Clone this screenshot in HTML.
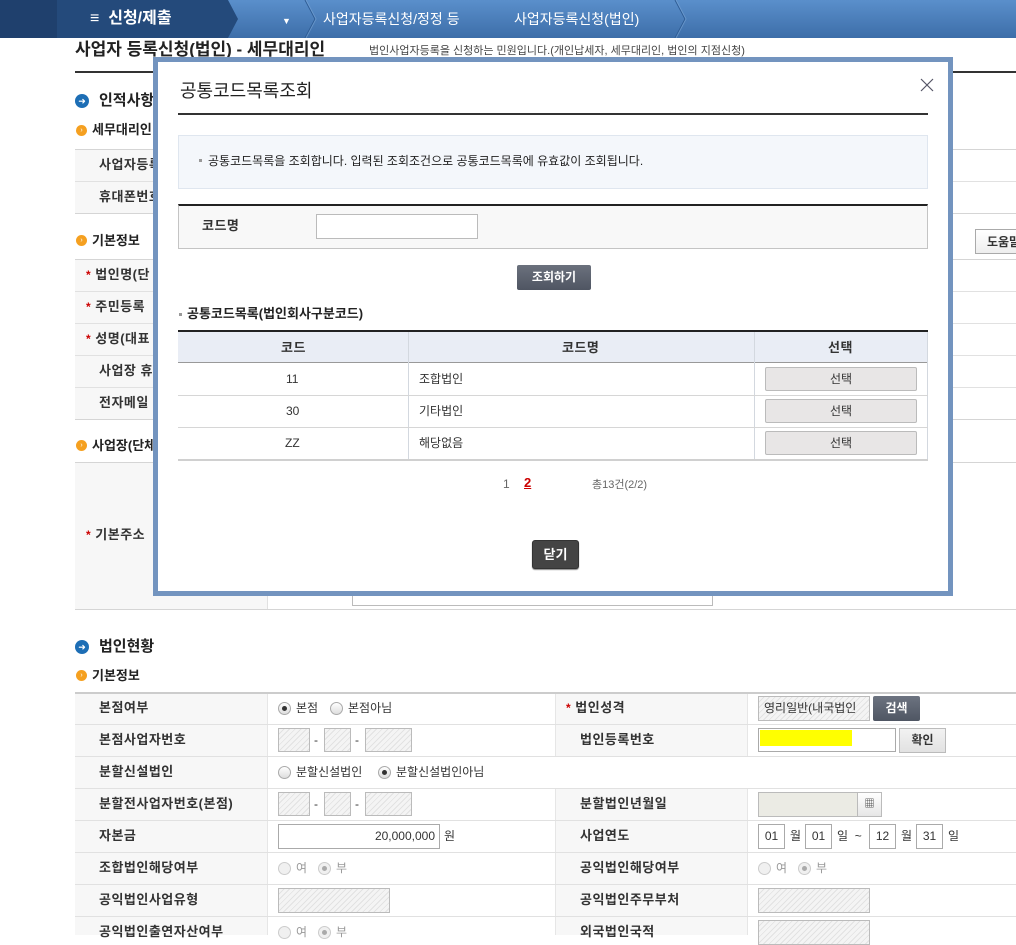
<!DOCTYPE html>
<html><head><meta charset="utf-8">
<style>
*{margin:0;padding:0;box-sizing:border-box}
body{width:1016px;height:935px;overflow:hidden;background:#fff;font-family:"Liberation Sans","Noto Sans CJK KR",sans-serif;font-size:12px;color:#333;position:relative;line-height:16px}
.a{position:absolute}
.lbl{position:absolute;font-weight:bold;font-size:13px;color:#333;letter-spacing:0.5px;white-space:nowrap;line-height:16px}
.star{color:#c00;font-size:12px}
.hl{position:absolute;height:1px;background:#e1e1e1}
.hat{position:absolute;border:1px solid #bbb;background:repeating-linear-gradient(135deg,#f4f4f4 0 3px,#e2e2e2 3px 4px)}
.inp{position:absolute;border:1px solid #aaa;background:#fff;font-size:12px;line-height:22px;text-align:center}
.rad{position:absolute;width:13px;height:13px;border-radius:50%;border:1px solid #aaa;background:linear-gradient(#fff,#ddd)}
.rad.on::after{content:"";position:absolute;left:3px;top:3px;width:5px;height:5px;border-radius:50%;background:#333}
.rad.dis{border-color:#ccc;background:#f0f0f0}
.rad.dis.on::after{background:#aaa}
.t{position:absolute;font-size:12px;white-space:nowrap;line-height:16px}
.h2{position:absolute;font-weight:bold;font-size:15px;color:#222;white-space:nowrap;line-height:18px}
.h3{position:absolute;font-weight:bold;font-size:13px;color:#222;white-space:nowrap;line-height:16px}
.bic{position:absolute;width:14px;height:14px;border-radius:50%;background:#1d6eb5;color:#fff;font-size:9px;line-height:14px;text-align:center}
.oic{position:absolute;width:11px;height:11px;border-radius:50%;background:#f5a020;color:#fff;font-size:7px;line-height:11px;text-align:center}
</style></head><body>

<div class="a" style="left:0;top:0;width:1016px;height:38px;background:linear-gradient(#5a8fcb,#3d6ea9)"></div>
<div class="a" style="left:0;top:0;width:57px;height:38px;background:#1f406d"></div>
<div class="a" style="left:57px;top:0;width:171px;height:38px;background:#244a7b"></div>
<svg class="a" style="left:220px;top:0" width="20" height="38"><polygon points="0,0 8,0 18,19 8,38 0,38" fill="#244a7b"/></svg>
<svg class="a" style="left:300px;top:0" width="716" height="38"><polyline points="5,0 15,19 5,38" fill="none" stroke="#2c5a93"/><polyline points="6,0 16,19 6,38" fill="none" stroke="#7ba6d6" opacity=".6"/><polyline points="375,0 385,19 375,38" fill="none" stroke="#2c5a93"/><polyline points="376,0 386,19 376,38" fill="none" stroke="#7ba6d6" opacity=".6"/></svg>
<div class="a" style="left:90px;top:10px;color:#fff;font-weight:bold;font-size:16px;line-height:18px">≡&nbsp; 신청/제출</div>
<div class="a" style="left:282px;top:13px;color:#fff;font-size:9px">▼</div>
<div class="a" style="left:323px;top:10px;color:#fff;font-size:14px;line-height:18px">사업자등록신청/정정 등</div>
<div class="a" style="left:514px;top:10px;color:#fff;font-size:14px;line-height:18px">사업자등록신청(법인)</div>

<div class="a" style="left:75px;top:40px;font-size:17px;font-weight:bold;color:#222;line-height:20px">사업자 등록신청(법인) - 세무대리인</div>
<div class="a" style="left:369px;top:44px;font-size:11px;color:#444;line-height:14px">법인사업자등록을 신청하는 민원입니다.(개인납세자, 세무대리인, 법인의 지점신청)</div>
<div class="a" style="left:75px;top:71px;width:941px;height:2px;background:#333"></div>

<div class="bic" style="left:75px;top:94px">➜</div><div class="h2" style="left:99px;top:92px">인적사항</div>
<div class="oic" style="left:76px;top:125px">›</div><div class="h3" style="left:92px;top:122px">세무대리인</div>
<div class="a" style="left:75px;top:149px;width:200px;height:64px;background:#f7f7f7"></div>
<div class="hl" style="left:75px;top:149px;width:941px;background:#d5d5d5"></div>
<div class="hl" style="left:75px;top:181px;width:941px"></div>
<div class="hl" style="left:75px;top:213px;width:941px;background:#d5d5d5"></div>
<div class="lbl" style="left:99px;top:157px">사업자등록</div>
<div class="lbl" style="left:99px;top:189px">휴대폰번호</div>

<div class="oic" style="left:76px;top:235px">›</div><div class="h3" style="left:92px;top:233px">기본정보</div>
<div class="a" style="left:975px;top:229px;width:45px;height:25px;border:1px solid #aaa;background:linear-gradient(#fff,#eee);font-size:12px;font-weight:bold;padding:4px 0 0 11px;white-space:nowrap">도움말</div>
<div class="a" style="left:75px;top:259px;width:200px;height:160px;background:#f7f7f7"></div>
<div class="hl" style="left:75px;top:259px;width:941px;background:#d5d5d5"></div>
<div class="hl" style="left:75px;top:291px;width:941px"></div>
<div class="hl" style="left:75px;top:323px;width:941px"></div>
<div class="hl" style="left:75px;top:355px;width:941px"></div>
<div class="hl" style="left:75px;top:387px;width:941px"></div>
<div class="hl" style="left:75px;top:419px;width:941px;background:#d5d5d5"></div>
<div class="lbl" style="left:86px;top:267px"><span class="star">*</span> 법인명(단</div>
<div class="lbl" style="left:86px;top:299px"><span class="star">*</span> 주민등록</div>
<div class="lbl" style="left:86px;top:331px"><span class="star">*</span> 성명(대표</div>
<div class="lbl" style="left:99px;top:363px">사업장 휴</div>
<div class="lbl" style="left:99px;top:395px">전자메일</div>

<div class="oic" style="left:76px;top:440px">›</div><div class="h3" style="left:92px;top:438px">사업장(단체</div>
<div class="a" style="left:75px;top:462px;width:192px;height:147px;background:#f7f7f7"></div>
<div class="hl" style="left:75px;top:462px;width:941px;background:#d5d5d5"></div>
<div class="hl" style="left:75px;top:609px;width:941px;background:#d5d5d5"></div>
<div class="a" style="left:267px;top:462px;width:1px;height:147px;background:#e1e1e1"></div>
<div class="lbl" style="left:86px;top:527px"><span class="star">*</span> 기본주소</div>
<div class="a" style="left:352px;top:585px;width:361px;height:21px;border:1px solid #bbb;background:#fff"></div>

<div class="bic" style="left:75px;top:640px">➜</div><div class="h2" style="left:99px;top:638px">법인현황</div>
<div class="oic" style="left:76px;top:670px">›</div><div class="h3" style="left:92px;top:668px">기본정보</div>
<div class="a" style="left:75px;top:692px;width:192px;height:243px;background:#f7f7f7"></div>
<div class="a" style="left:555px;top:692px;width:193px;height:64px;background:#f7f7f7"></div>
<div class="a" style="left:555px;top:788px;width:193px;height:147px;background:#f7f7f7"></div>
<div class="a" style="left:267px;top:692px;width:1px;height:243px;background:#e6e6e6"></div>
<div class="a" style="left:555px;top:692px;width:1px;height:64px;background:#e6e6e6"></div>
<div class="a" style="left:555px;top:788px;width:1px;height:147px;background:#e6e6e6"></div>
<div class="a" style="left:747px;top:692px;width:1px;height:64px;background:#e6e6e6"></div>
<div class="a" style="left:747px;top:788px;width:1px;height:147px;background:#e6e6e6"></div>
<div class="hl" style="left:75px;top:692px;width:941px;background:#ccc;height:2px"></div>
<div class="hl" style="left:75px;top:724px;width:941px"></div>
<div class="hl" style="left:75px;top:756px;width:941px"></div>
<div class="hl" style="left:75px;top:788px;width:941px"></div>
<div class="hl" style="left:75px;top:820px;width:941px"></div>
<div class="hl" style="left:75px;top:852px;width:941px"></div>
<div class="hl" style="left:75px;top:884px;width:941px"></div>
<div class="hl" style="left:75px;top:916px;width:941px"></div>

<div class="lbl" style="left:99px;top:700px">본점여부</div>
<div class="lbl" style="left:99px;top:732px">본점사업자번호</div>
<div class="lbl" style="left:99px;top:764px">분할신설법인</div>
<div class="lbl" style="left:99px;top:796px">분할전사업자번호(본점)</div>
<div class="lbl" style="left:99px;top:828px">자본금</div>
<div class="lbl" style="left:99px;top:860px">조합법인해당여부</div>
<div class="lbl" style="left:99px;top:892px">공익법인사업유형</div>
<div class="lbl" style="left:99px;top:924px">공익법인출연자산여부</div>

<div class="lbl" style="left:566px;top:700px"><span class="star">*</span> 법인성격</div>
<div class="lbl" style="left:580px;top:732px">법인등록번호</div>
<div class="lbl" style="left:580px;top:796px">분할법인년월일</div>
<div class="lbl" style="left:580px;top:828px">사업연도</div>
<div class="lbl" style="left:580px;top:860px">공익법인해당여부</div>
<div class="lbl" style="left:580px;top:892px">공익법인주무부처</div>
<div class="lbl" style="left:580px;top:924px">외국법인국적</div>

<div class="rad on" style="left:278px;top:702px"></div><div class="t" style="left:296px;top:700px">본점</div>
<div class="rad" style="left:330px;top:702px"></div><div class="t" style="left:348px;top:700px">본점아님</div>
<div class="hat" style="left:758px;top:696px;width:112px;height:25px;font-size:12px;line-height:23px;padding-left:5px;white-space:nowrap;overflow:hidden">영리일반(내국법인</div>
<div class="a" style="left:873px;top:696px;width:47px;height:25px;background:linear-gradient(#6c7380,#4f5663);border-radius:2px;color:#fff;font-weight:bold;font-size:12px;text-align:center;line-height:25px">검색</div>
<div class="hat" style="left:278px;top:728px;width:32px;height:24px"></div><div class="t" style="left:314px;top:732px">-</div>
<div class="hat" style="left:324px;top:728px;width:27px;height:24px"></div><div class="t" style="left:355px;top:732px">-</div>
<div class="hat" style="left:365px;top:728px;width:47px;height:24px"></div>
<div class="a" style="left:758px;top:728px;width:138px;height:24px;border:1px solid #aaa;background:#fff"></div>
<div class="a" style="left:760px;top:730px;width:92px;height:16px;background:#ff0"></div>
<div class="a" style="left:899px;top:728px;width:47px;height:25px;border:1px solid #bbb;background:linear-gradient(#f2f2f2,#e2e2e2);font-weight:bold;font-size:12px;text-align:center;line-height:23px">확인</div>
<div class="rad" style="left:278px;top:766px"></div><div class="t" style="left:296px;top:764px">분할신설법인</div>
<div class="rad on" style="left:378px;top:766px"></div><div class="t" style="left:396px;top:764px">분할신설법인아님</div>
<div class="hat" style="left:278px;top:792px;width:32px;height:24px"></div><div class="t" style="left:314px;top:796px">-</div>
<div class="hat" style="left:324px;top:792px;width:27px;height:24px"></div><div class="t" style="left:355px;top:796px">-</div>
<div class="hat" style="left:365px;top:792px;width:47px;height:24px"></div>
<div class="a" style="left:758px;top:792px;width:100px;height:25px;border:1px solid #bbb;background:#ebebe4"></div>
<div class="a" style="left:857px;top:792px;width:25px;height:25px;border:1px solid #bbb;background:linear-gradient(#fff,#e6e6e6);font-size:10px;text-align:center;line-height:23px">▦</div>
<div class="inp" style="left:278px;top:824px;width:162px;height:25px;text-align:right;padding-right:4px">20,000,000</div><div class="t" style="left:444px;top:828px">원</div>
<div class="inp" style="left:758px;top:824px;width:27px;height:25px">01</div><div class="t" style="left:790px;top:828px">월</div>
<div class="inp" style="left:805px;top:824px;width:27px;height:25px">01</div><div class="t" style="left:837px;top:828px">일 &nbsp;~</div>
<div class="inp" style="left:869px;top:824px;width:27px;height:25px">12</div><div class="t" style="left:901px;top:828px">월</div>
<div class="inp" style="left:916px;top:824px;width:27px;height:25px">31</div><div class="t" style="left:948px;top:828px">일</div>
<div class="rad dis" style="left:278px;top:862px"></div><div class="t" style="left:296px;top:860px;color:#999">여</div>
<div class="rad dis on" style="left:318px;top:862px"></div><div class="t" style="left:336px;top:860px;color:#999">부</div>
<div class="rad dis" style="left:758px;top:862px"></div><div class="t" style="left:776px;top:860px;color:#999">여</div>
<div class="rad dis on" style="left:798px;top:862px"></div><div class="t" style="left:816px;top:860px;color:#999">부</div>
<div class="hat" style="left:278px;top:888px;width:112px;height:25px"></div>
<div class="hat" style="left:758px;top:888px;width:112px;height:25px"></div>
<div class="rad dis" style="left:278px;top:926px"></div><div class="t" style="left:296px;top:924px;color:#999">여</div>
<div class="rad dis on" style="left:318px;top:926px"></div><div class="t" style="left:336px;top:924px;color:#999">부</div>
<div class="hat" style="left:758px;top:920px;width:112px;height:25px"></div>

<!-- MODAL -->
<div class="a" style="left:153px;top:57px;width:800px;height:539px;border:5px solid #7394bf;background:#fff"></div>
<div class="a" style="left:180px;top:80px;font-size:18px;color:#222;line-height:22px">공통코드목록조회</div>
<svg class="a" style="left:920px;top:78px" width="14" height="14"><path d="M1 1L13 13M13 1L1 13" stroke="#556" stroke-width="1.2"/></svg>
<div class="a" style="left:178px;top:113px;width:750px;height:2px;background:#333"></div>
<div class="a" style="left:178px;top:135px;width:750px;height:54px;background:#f4f7fb;border:1px solid #dfe6ef"></div>
<div class="a" style="left:199px;top:159px;width:3px;height:3px;background:#999"></div>
<div class="a" style="left:208px;top:153px;font-size:12px;color:#222">공통코드목록을 조회합니다. 입력된 조회조건으로 공통코드목록에 유효값이 조회됩니다.</div>
<div class="a" style="left:178px;top:204px;width:750px;height:45px;background:#f8f8f8;border:1px solid #c4c4c4;border-top:2px solid #222"></div>
<div class="lbl" style="left:202px;top:218px">코드명</div>
<div class="a" style="left:316px;top:214px;width:162px;height:25px;border:1px solid #bbb;background:#fff"></div>
<div class="a" style="left:517px;top:265px;width:74px;height:25px;background:linear-gradient(#6b717d,#4f5562);border-radius:2px;color:#fff;font-weight:bold;font-size:12px;text-align:center;line-height:25px">조회하기</div>
<div class="a" style="left:179px;top:313px;width:3px;height:3px;background:#999"></div>
<div class="h3" style="left:187px;top:306px">공통코드목록(법인회사구분코드)</div>
<div class="a" style="left:178px;top:330px;width:750px;height:2px;background:#222"></div>
<div class="a" style="left:178px;top:332px;width:750px;height:31px;background:#e9edf5;border-bottom:1px solid #999"></div>
<div class="a" style="left:408px;top:332px;width:1px;height:127px;background:#d3d8df"></div>
<div class="a" style="left:754px;top:332px;width:1px;height:127px;background:#d3d8df"></div>
<div class="a" style="left:927px;top:332px;width:1px;height:127px;background:#d3d8df"></div>
<div class="lbl" style="left:281px;top:340px">코드</div>
<div class="lbl" style="left:562px;top:340px">코드명</div>
<div class="lbl" style="left:828px;top:340px">선택</div>
<div class="hl" style="left:178px;top:395px;width:750px;background:#d6d6d6"></div>
<div class="hl" style="left:178px;top:427px;width:750px;background:#d6d6d6"></div>
<div class="a" style="left:178px;top:459px;width:750px;height:2px;background:#d0d0d0"></div>
<div class="t" style="left:286px;top:371px">11</div><div class="t" style="left:419px;top:371px">조합법인</div>
<div class="t" style="left:286px;top:403px">30</div><div class="t" style="left:419px;top:403px">기타법인</div>
<div class="t" style="left:285px;top:435px">ZZ</div><div class="t" style="left:419px;top:435px">해당없음</div>
<div class="a" style="left:765px;top:367px;width:152px;height:24px;border:1px solid #bbb;border-radius:2px;background:#e8e6e6;font-size:12px;text-align:center;line-height:22px">선택</div>
<div class="a" style="left:765px;top:399px;width:152px;height:24px;border:1px solid #bbb;border-radius:2px;background:#e8e6e6;font-size:12px;text-align:center;line-height:22px">선택</div>
<div class="a" style="left:765px;top:431px;width:152px;height:24px;border:1px solid #bbb;border-radius:2px;background:#e8e6e6;font-size:12px;text-align:center;line-height:22px">선택</div>
<div class="t" style="left:503px;top:476px;color:#666">1</div>
<div class="t" style="left:524px;top:475px;color:#c00;font-weight:bold;text-decoration:underline;font-size:13px">2</div>
<div class="t" style="left:592px;top:477px;color:#666;font-size:11px">총13건(2/2)</div>
<div class="a" style="left:532px;top:540px;width:47px;height:29px;background:#444;border:1px solid #333;border-radius:3px;box-shadow:0 1px 1px #888;color:#fff;font-weight:bold;font-size:13px;text-align:center;line-height:27px">닫기</div>
</body></html>
